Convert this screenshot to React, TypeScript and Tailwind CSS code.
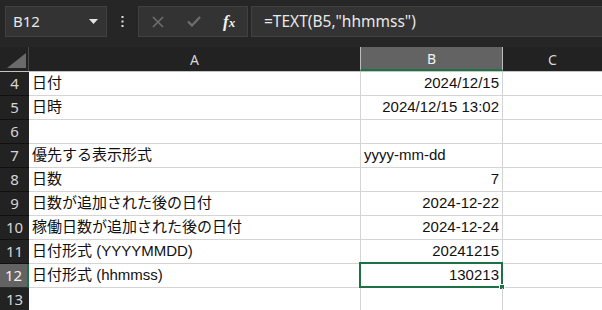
import React from "react";

const cellFont = { fontFamily: '"Liberation Sans", "Noto Sans CJK JP", sans-serif' };

type Row = { n: number; a: string; b: string; bAlign?: "left" | "right" };

const rows: Row[] = [
  { n: 4, a: "日付", b: "2024/12/15" },
  { n: 5, a: "日時", b: "2024/12/15 13:02" },
  { n: 6, a: "", b: "" },
  { n: 7, a: "優先する表示形式", b: "yyyy-mm-dd", bAlign: "left" },
  { n: 8, a: "日数", b: "7" },
  { n: 9, a: "日数が追加された後の日付", b: "2024-12-22" },
  { n: 10, a: "稼働日数が追加された後の日付", b: "2024-12-24" },
  { n: 11, a: "日付形式 (YYYYMMDD)", b: "20241215" },
  { n: 12, a: "日付形式 (hhmmss)", b: "130213" },
  { n: 13, a: "", b: "" },
];

export default function App() {
  return (
    <div className="w-[602px] h-[310px] overflow-hidden bg-[#262626] flex flex-col" style={{ fontFamily: '"Noto Sans", "Liberation Sans", sans-serif' }}>
      {/* formula bar */}
      <div className="h-[47px] flex items-start pt-[6px] pl-[5px] shrink-0">
        <div className="w-[102px] h-[31px] bg-[#333333] border border-[#414141] flex items-center justify-between pl-[7px] pr-[8px]">
          <span className="text-[15px] text-[#e8e8e8]">B12</span>
          <svg width="9" height="5" viewBox="0 0 9 5"><path d="M0 0h9L4.5 5z" fill="#e6e6e6" /></svg>
        </div>
        <div className="w-[31px] h-[31px] flex items-center justify-center">
          <svg width="3" height="11" viewBox="0 0 3 11"><rect x="0.5" y="0" width="2" height="2" fill="#e0e0e0" /><rect x="0.5" y="4.5" width="2" height="2" fill="#e0e0e0" /><rect x="0.5" y="9" width="2" height="2" fill="#e0e0e0" /></svg>
        </div>
        <div className="w-[110px] h-[31px] bg-[#333333] border border-[#414141] flex items-center">
          <div className="w-[36px] flex justify-center ml-[1px]">
            <svg width="12" height="12" viewBox="0 0 12 12"><path d="M1 1L11 11M11 1L1 11" stroke="#6e6e6e" strokeWidth="1.6" /></svg>
          </div>
          <div className="w-[36px] flex justify-center">
            <svg width="14" height="11" viewBox="0 0 14 11"><path d="M1 5.5L5 9.5L13 1" stroke="#6e6e6e" strokeWidth="2.2" fill="none" /></svg>
          </div>
          <div className="w-[36px] flex justify-center">
            <span className="text-[#f0f0f0] text-[17px] italic font-bold leading-none" style={{ fontFamily: '"Liberation Serif", serif' }}>f<span className="text-[13px]">x</span></span>
          </div>
        </div>
        <div className="ml-[3px] flex-1 h-[31px] bg-[#333333] border border-[#414141] border-r-0 flex items-center pl-[12px]">
          <span className="text-[15.5px] text-[#e8e8e8]">=TEXT(B5,"hhmmss")</span>
        </div>
      </div>

      {/* column headers */}
      <div className="h-[25px] flex shrink-0 bg-[#222222] border-b border-[#c4c4c4]">
        <div className="w-[29px] border-r border-[#4a4a4a] flex items-end justify-end pr-[2px] pb-[3px]">
          <svg width="19" height="15" viewBox="0 0 19 15"><path d="M19 0V15H0z" fill="#6a6a6a" /></svg>
        </div>
        <div className="w-[331px] flex items-center justify-center text-[14px] text-[#d6d6d6]">A</div>
        <div className="w-[143px] bg-[#636363] border-x border-[#bdbdbd] border-b-2 border-b-[#1e7145] flex items-center justify-center text-[14px] text-[#f2f2f2]">B</div>
        <div className="flex-1 flex items-center justify-center text-[14px] text-[#d6d6d6]">C</div>
      </div>

      {/* rows */}
      {rows.map((r) => {
        const sel = r.n === 12;
        return (
          <div key={r.n} className="h-[24px] flex shrink-0">
            <div
              className={
                sel
                  ? "w-[29px] bg-[#636363] border-b border-[#2a2a2a] border-r-2 border-r-[#1e7145] flex items-center justify-center text-[15px] text-[#f2f2f2]"
                  : "w-[29px] bg-[#222222] border-b border-[#111111] flex items-center justify-center text-[15px] text-[#d6d6d6]"
              }
              style={{ fontFamily: '"Noto Sans", sans-serif' }}
            >
              {r.n}
            </div>
            <div className="flex-1 flex bg-white">
              <div className="w-[332px] border-b border-r border-[#d4d4d4] flex items-center pl-[3px] text-[15px] text-[#111] whitespace-nowrap" style={cellFont}>
                {r.a}
              </div>
              <div
                className={
                  "relative w-[142px] border-b border-r border-[#d4d4d4] flex items-center px-[3px] text-[15px] text-[#111] whitespace-nowrap " +
                  (r.bAlign === "left" ? "justify-start" : "justify-end")
                }
                style={cellFont}
              >
                {r.b}
                {sel && (
                  <div className="absolute -left-[2px] -top-[2px] -right-[1px] -bottom-[1px] border-2 border-[#1e7145] pointer-events-none">
                    <div className="absolute -right-[4px] -bottom-[4px] w-[6px] h-[6px] bg-[#1e7145] border border-white" />
                  </div>
                )}
              </div>
              <div className="flex-1 border-b border-[#d4d4d4]" />
            </div>
          </div>
        );
      })}
    </div>
  );
}
